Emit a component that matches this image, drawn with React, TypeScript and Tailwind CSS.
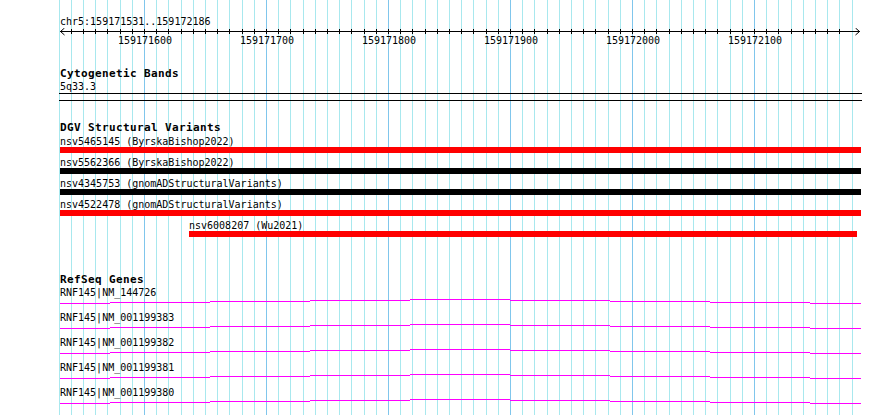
import React from "react";

const ORIGIN_X = 144; // x of 159171600
const PX_PER_BP = 1.22;
const bpToX = (bp: number) => ORIGIN_X + (bp - 159171600) * PX_PER_BP;

const gridLines: { x: number; major: boolean }[] = [];
for (let k = -7; k <= 58; k++) {
  gridLines.push({ x: Math.round(ORIGIN_X + 12.2 * k), major: k % 10 === 0 });
}

const ticks: number[] = [];
for (let k = -6; k <= 57; k++) ticks.push(Math.round(ORIGIN_X + 12.2 * k));

const tickLabels = [159171600, 159171700, 159171800, 159171900, 159172000, 159172100];

const variants = [
  { label: "nsv5465145 (ByrskaBishop2022)", color: "bg-[#ff0000]", start: 60, end: 861 },
  { label: "nsv5562366 (ByrskaBishop2022)", color: "bg-black", start: 60, end: 861 },
  { label: "nsv4345753 (gnomADStructuralVariants)", color: "bg-black", start: 60, end: 861 },
  { label: "nsv4522478 (gnomADStructuralVariants)", color: "bg-[#ff0000]", start: 60, end: 861 },
  { label: "nsv6008207 (Wu2021)", color: "bg-[#ff0000]", start: 189, end: 857 },
];

const genes = [
  "RNF145|NM_144726",
  "RNF145|NM_001199383",
  "RNF145|NM_001199382",
  "RNF145|NM_001199381",
  "RNF145|NM_001199380",
];

const hatSegments: [number, number, number][] = [
  [60, 110, 0],
  [110, 210, 1],
  [210, 310, 2],
  [310, 410, 3],
  [410, 510, 4],
  [510, 610, 3],
  [610, 710, 2],
  [710, 810, 1],
  [810, 861, 0],
];

function GeneLine() {
  return (
    <svg width={890} height={6} className="block" shapeRendering="crispEdges">
      {hatSegments.map(([a, b, lvl], i) => (
        <rect key={i} x={a} y={5 - lvl} width={b - a} height={1} fill="#ff00ff" />
      ))}
    </svg>
  );
}

export default function App() {
  return (
    <div className="relative w-[890px] h-[415px] overflow-hidden bg-white text-black font-['DejaVu_Sans_Mono',monospace] text-[10px]">
      {/* background grid */}
      <svg className="absolute inset-0" width={890} height={415} shapeRendering="crispEdges">
        {gridLines.map((g, i) => (
          <rect key={i} x={g.x} y={0} width={1} height={415} fill={g.major ? "#80c6ec" : "#a8e8ee"} />
        ))}
      </svg>

      <div className="relative flex flex-col">
        {/* location */}
        <div className="pt-[15px] pl-[60px] leading-[13px] whitespace-pre">chr5:159171531..159172186</div>

        {/* ruler */}
        <div className="relative h-[39px]">
          <svg className="absolute left-0 top-0" width={890} height={8}>
            <rect x={60} y={3} width={800} height={1} fill="#000" shapeRendering="crispEdges" />
            {ticks.map((t, i) => (
              <rect key={i} x={t} y={1} width={1} height={5} fill="#000" shapeRendering="crispEdges" />
            ))}
            <path d="M64.5 0 L60.5 3.5 L64.5 7" fill="none" stroke="#000" strokeWidth={1} />
            <path d="M855.5 0 L859.5 3.5 L855.5 7" fill="none" stroke="#000" strokeWidth={1} />
          </svg>
          {tickLabels.map((bp) => (
            <span
              key={bp}
              className="absolute top-[6px] -translate-x-1/2 leading-[13px] whitespace-pre"
              style={{ left: Math.round(bpToX(bp)) + 1 }}
            >
              {bp}
            </span>
          ))}
        </div>

        {/* Cytogenetic bands */}
        <div className="pl-[60px] h-[14px] leading-[14px] text-[11px] font-bold tracking-[0.38px] whitespace-pre">
          Cytogenetic Bands
        </div>
        <div className="pl-[60px] h-[12px] leading-[12px] whitespace-pre">5q33.3</div>
        <div className="ml-[59px] w-[803px] h-[8px] border-y border-black" />

        {/* DGV */}
        <div className="mt-[20px] pl-[60px] h-[14px] leading-[14px] text-[11px] font-bold tracking-[0.38px] whitespace-pre">
          DGV Structural Variants
        </div>
        <div className="flex flex-col gap-[3px]">
          {variants.map((v) => (
            <div key={v.label} className="flex flex-col">
              <div className="h-[12px] leading-[14px] whitespace-pre" style={{ paddingLeft: v.start }}>
                {v.label}
              </div>
              <div className={`h-[6px] ${v.color}`} style={{ marginLeft: v.start, width: v.end - v.start }} />
            </div>
          ))}
        </div>

        {/* RefSeq */}
        <div className="mt-[36px] pl-[60px] h-[13px] leading-[14px] text-[11px] font-bold tracking-[0.38px] whitespace-pre">
          RefSeq Genes
        </div>
        <div className="flex flex-col gap-[7px]">
          {genes.map((g) => (
            <div key={g} className="flex flex-col">
              <div className="pl-[60px] h-[12px] leading-[14px] whitespace-pre">{g}</div>
              <GeneLine />
            </div>
          ))}
        </div>
      </div>
    </div>
  );
}
